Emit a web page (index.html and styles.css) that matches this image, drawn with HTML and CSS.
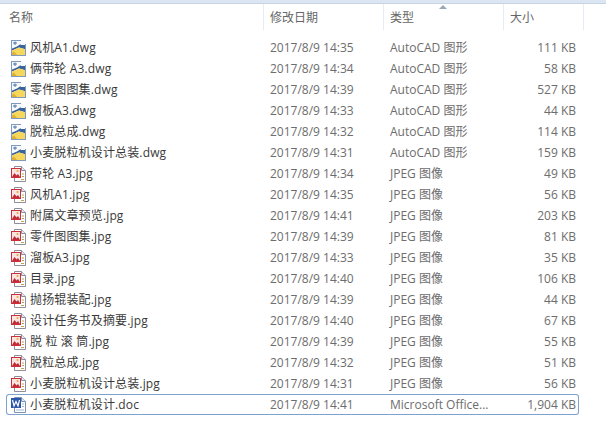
FILE: index.html
```html
<!DOCTYPE html>
<html lang="zh-CN">
<head>
    <meta charset="UTF-8">
    <title>小麦脱粒机设计</title>
    <link rel="stylesheet" href="styles.css">
</head>
<body>
    <svg class="defs" width="0" height="0">
        <symbol id="dwg" viewBox="0 0 15 16">
            <path d="M0 0H10L15 4V16H0Z" fill="#f8fafd"/>
            <path d="M0 9L6 6.500L9 4.500H10V5H15V9.500L8 7.500L0 11Z" fill="#3a6499"/>
            <path d="M0 11L8 7.500L15 9.500V16H0Z" fill="#f6d75c"/>
            <path d="M0 13.500L3 11.500L7 16H0Z" fill="#e0b035"/>
            <path d="M2 3H6M4 1.500V5" stroke="#4b74ad"/>
            <path d="M0 .5H10M.5 0V16M14.500 4V16M0 15.500H15" stroke="#7f9abd" fill="none"/>
        </symbol>
        <symbol id="jpg" viewBox="0 0 15 16">
            <path d="M3.500.5H10.500L14.500 4.500V15.500H3.500Z" fill="#fff" stroke="#8d8d9c"/>
            <path d="M10.500.5V4.500H14.500" fill="#e6e6ee" stroke="#8d8d9c"/>
            <rect x=".5" y="2.500" width="9" height="9" fill="#f8e4e0" stroke="#c9303a"/>
            <path d="M1 11L3.500 7L5.500 9.500L7 8L9 11Z" fill="#c22a35"/>
            <circle cx="6.500" cy="5" r="1" fill="#e9a23b"/>
            <path d="M10 13.500H13M11 8H13M11 10.500H13" stroke="#c2a04d"/>
        </symbol>
        <symbol id="doc" viewBox="0 0 15 16">
            <path d="M3.500.5H10.500L14.500 4.500V15.500H3.500Z" fill="#fff" stroke="#7d93b5"/>
            <path d="M10.500.5V4.500H14.500" fill="#dfe8f4" stroke="#7d93b5"/>
            <rect x="0" y="1" width="10" height="10" fill="#2b55a8"/>
            <path d="M1.500 3L3 9L5 4.500L7 9L8.500 3" fill="none" stroke="#fff" stroke-width="1.200"/>
            <path d="M5 13H13M11 7H13M11 9.500H13" stroke="#9db4d3"/>
        </symbol>
    </svg>

    <div class="top-edge"></div>

    <div class="cols header">
        <div class="head-cell first">名称</div>
        <div class="head-cell">修改日期</div>
        <div class="head-cell sorted">类型</div>
        <div class="head-cell">大小</div>
    </div>

    <div class="list" id="list">
        <div class="cols row"><div class="name"><svg class="icon"><use href="#dwg"/></svg>风机A1.dwg</div><div class="cell">2017/8/9 14:35</div><div class="cell">AutoCAD 图形</div><div class="size">111 KB</div></div>
        <div class="cols row"><div class="name"><svg class="icon"><use href="#dwg"/></svg>俩带轮 A3.dwg</div><div class="cell">2017/8/9 14:34</div><div class="cell">AutoCAD 图形</div><div class="size">58 KB</div></div>
        <div class="cols row"><div class="name"><svg class="icon"><use href="#dwg"/></svg>零件图图集.dwg</div><div class="cell">2017/8/9 14:39</div><div class="cell">AutoCAD 图形</div><div class="size">527 KB</div></div>
        <div class="cols row"><div class="name"><svg class="icon"><use href="#dwg"/></svg>溜板A3.dwg</div><div class="cell">2017/8/9 14:33</div><div class="cell">AutoCAD 图形</div><div class="size">44 KB</div></div>
        <div class="cols row"><div class="name"><svg class="icon"><use href="#dwg"/></svg>脱粒总成.dwg</div><div class="cell">2017/8/9 14:32</div><div class="cell">AutoCAD 图形</div><div class="size">114 KB</div></div>
        <div class="cols row"><div class="name"><svg class="icon"><use href="#dwg"/></svg>小麦脱粒机设计总装.dwg</div><div class="cell">2017/8/9 14:31</div><div class="cell">AutoCAD 图形</div><div class="size">159 KB</div></div>
        <div class="cols row"><div class="name"><svg class="icon"><use href="#jpg"/></svg>带轮 A3.jpg</div><div class="cell">2017/8/9 14:34</div><div class="cell">JPEG 图像</div><div class="size">49 KB</div></div>
        <div class="cols row"><div class="name"><svg class="icon"><use href="#jpg"/></svg>风机A1.jpg</div><div class="cell">2017/8/9 14:35</div><div class="cell">JPEG 图像</div><div class="size">56 KB</div></div>
        <div class="cols row"><div class="name"><svg class="icon"><use href="#jpg"/></svg>附属文章预览.jpg</div><div class="cell">2017/8/9 14:41</div><div class="cell">JPEG 图像</div><div class="size">203 KB</div></div>
        <div class="cols row"><div class="name"><svg class="icon"><use href="#jpg"/></svg>零件图图集.jpg</div><div class="cell">2017/8/9 14:39</div><div class="cell">JPEG 图像</div><div class="size">81 KB</div></div>
        <div class="cols row"><div class="name"><svg class="icon"><use href="#jpg"/></svg>溜板A3.jpg</div><div class="cell">2017/8/9 14:33</div><div class="cell">JPEG 图像</div><div class="size">35 KB</div></div>
        <div class="cols row"><div class="name"><svg class="icon"><use href="#jpg"/></svg>目录.jpg</div><div class="cell">2017/8/9 14:40</div><div class="cell">JPEG 图像</div><div class="size">106 KB</div></div>
        <div class="cols row"><div class="name"><svg class="icon"><use href="#jpg"/></svg>抛扬辊装配.jpg</div><div class="cell">2017/8/9 14:39</div><div class="cell">JPEG 图像</div><div class="size">44 KB</div></div>
        <div class="cols row"><div class="name"><svg class="icon"><use href="#jpg"/></svg>设计任务书及摘要.jpg</div><div class="cell">2017/8/9 14:40</div><div class="cell">JPEG 图像</div><div class="size">67 KB</div></div>
        <div class="cols row"><div class="name"><svg class="icon"><use href="#jpg"/></svg>脱 粒 滚 筒.jpg</div><div class="cell">2017/8/9 14:39</div><div class="cell">JPEG 图像</div><div class="size">55 KB</div></div>
        <div class="cols row"><div class="name"><svg class="icon"><use href="#jpg"/></svg>脱粒总成.jpg</div><div class="cell">2017/8/9 14:32</div><div class="cell">JPEG 图像</div><div class="size">51 KB</div></div>
        <div class="cols row"><div class="name"><svg class="icon"><use href="#jpg"/></svg>小麦脱粒机设计总装.jpg</div><div class="cell">2017/8/9 14:31</div><div class="cell">JPEG 图像</div><div class="size">56 KB</div></div>
        <div class="cols row selected"><div class="name"><svg class="icon"><use href="#doc"/></svg>小麦脱粒机设计.doc</div><div class="cell">2017/8/9 14:41</div><div class="cell">Microsoft Office...</div><div class="size">1,904 KB</div></div>
    </div>
</body>
</html>
```

FILE: styles.css
```css
body {
    margin: 0;
    height: 421px;
    overflow: hidden;
    background-color: #fff;
    font-family: "Open Sans", "Noto Sans CJK SC", sans-serif;
    font-size: 12px;
    color: #6d6d6d;
}

.defs {
    display: block;
    height: 0;
}

.top-edge {
    height: 3px;
    background-color: #dce6f2;
    border-bottom: 1px solid #c6d3e3;
}

.cols {
    display: grid;
    grid-template-columns: 257px 120px 120px 76px;
    width: 573px;
    margin-left: 6px;
    box-sizing: border-box;
}

.header {
    height: 26px;
    width: 578px;
    grid-template-columns: 258px 120px 120px 80px;
}

.head-cell {
    position: relative;
    padding: 6px 0 0 6px;
    line-height: 16px;
    color: #666;
    border-right: 1px solid #e6ecf3;
}

.head-cell.first {
    padding-left: 3px;
}

.sorted::after {
    content: "";
    position: absolute;
    left: 55px;
    top: 1px;
    border: 4px solid transparent;
    border-top: 0;
    border-bottom-color: #9aa7b8;
}

.list {
    padding-top: 7px;
}

.row {
    height: 21px;
    line-height: 21px;
    white-space: nowrap;
}

.name {
    display: flex;
    align-items: center;
    padding-left: 5px;
    letter-spacing: 0.15px;
    color: #3a3a3a;
}

.icon {
    width: 15px;
    height: 16px;
    margin-right: 4px;
    flex: none;
}

.cell {
    padding-left: 7px;
}

.size {
    padding-right: 3px;
    text-align: right;
}

.selected {
    box-shadow: inset 0 0 0 1px #7da2ce;
    border-radius: 3px;
}
```
